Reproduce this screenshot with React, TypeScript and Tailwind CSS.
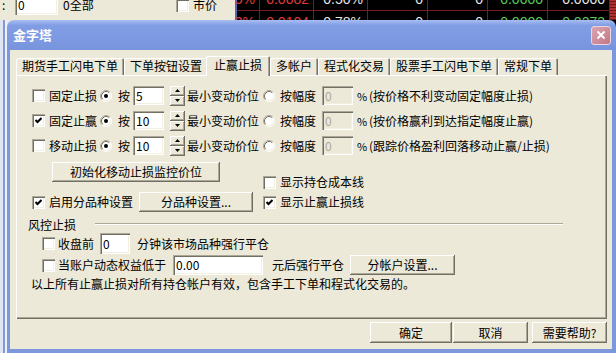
import React from "react";

const raised =
  "bg-[#ece9d8] shadow-[inset_-1px_-1px_#716f64,inset_1px_1px_#fff,inset_-2px_-2px_#aca899]";
const sunken =
  "shadow-[inset_1px_1px_#aca899,inset_2px_2px_#716f64,inset_-1px_-1px_#fff,inset_-2px_-2px_#f1efe2]";

function Box({ on = false }: { on?: boolean }) {
  return (
    <span className={`flex h-[13px] w-[13px] shrink-0 items-center justify-center bg-white ${sunken}`}>
      {on && (
        <svg width="7" height="7" viewBox="0 0 7 7">
          <polyline points="0.5,3 2.5,5 6.5,1" fill="none" stroke="#000" strokeWidth="2" />
        </svg>
      )}
    </span>
  );
}

function Check({
  on = false,
  label,
  tight = false,
  className = "",
}: {
  on?: boolean;
  label: string;
  tight?: boolean;
  className?: string;
}) {
  return (
    <span className={`flex h-[16px] items-center ${className}`}>
      <Box on={on} />
      <span className={tight ? "ml-[3px]" : "ml-[4px]"}>{label}</span>
    </span>
  );
}

function Radio({ on = false, className = "" }: { on?: boolean; className?: string }) {
  return (
    <svg className={`shrink-0 ${className}`} width="12" height="12" viewBox="0 0 12 12">
      <circle cx="6" cy="6" r="5" fill="#fff" />
      <path d="M2.11 9.89A5.5 5.5 0 0 1 9.89 2.11" fill="none" stroke="#aca899" />
      <path d="M2.82 9.18A4.5 4.5 0 0 1 9.18 2.82" fill="none" stroke="#716f64" />
      <path d="M9.89 2.11A5.5 5.5 0 0 1 2.11 9.89" fill="none" stroke="#fff" />
      <path d="M9.18 2.82A4.5 4.5 0 0 1 2.82 9.18" fill="none" stroke="#f1efe2" />
      {on && <circle cx="6" cy="6" r="2" fill="#000" />}
    </svg>
  );
}

function Field({ value, off = false, className = "" }: { value: string; off?: boolean; className?: string }) {
  return (
    <span
      className={`flex shrink-0 items-center pl-[3px] ${off ? "bg-[#ece9d8] text-[#aca899]" : "bg-white"} ${sunken} ${className}`}
    >
      {value}
    </span>
  );
}

function Spin({ className = "" }: { className?: string }) {
  return (
    <span className={`flex h-[20px] w-[15px] shrink-0 flex-col ${className}`}>
      <span className={`flex h-[10px] items-center justify-center ${raised}`}>
        <svg width="5" height="3" viewBox="0 0 5 3">
          <polygon points="2.5,0 5,3 0,3" fill="#000" />
        </svg>
      </span>
      <span className={`flex h-[10px] items-center justify-center ${raised}`}>
        <svg width="5" height="3" viewBox="0 0 5 3">
          <polygon points="0,0 5,0 2.5,3" fill="#000" />
        </svg>
      </span>
    </span>
  );
}

function Btn({ children, className = "" }: { children: React.ReactNode; className?: string }) {
  return <span className={`flex shrink-0 items-center justify-center ${raised} ${className}`}>{children}</span>;
}

const red = "text-[#e03c3c]";
const white = "text-[#e6e6e6]";
const green = "text-[#5cc85c]";

const cols = [
  { w: "w-[23px]", a: "5%", ca: red, b: "3%", cb: red },
  { w: "w-[54px]", a: "0.0082", ca: red, b: "0.0104", cb: red },
  { w: "w-[54px]", a: "0.50%", ca: white, b: "0.78%", cb: white },
  { w: "w-[60px]", a: "0", ca: white, b: "0", cb: white },
  { w: "w-[60px]", a: "0", ca: white, b: "0", cb: white },
  { w: "w-[60px]", a: "0.0000", ca: green, b: "0.0000", cb: green },
  { w: "w-[62px]", a: "0.0000", ca: white, b: "0.0273", cb: green },
];

const tabs = ["期货手工闪电下单", "下单按钮设置", "止赢止损", "多帐户", "程式化交易", "股票手工闪电下单", "常规下单"];

const stops = [
  { on: false, label: "固定止损", v: "5", note: "(按价格不利变动固定幅度止损)" },
  { on: true, label: "固定止赢", v: "10", note: "(按价格赢利到达指定幅度止赢)" },
  { on: false, label: "移动止损", v: "10", note: "(跟踪价格盈利回落移动止赢/止损)" },
];

export default function App() {
  return (
    <div className="flex h-[353px] w-[616px] flex-col overflow-hidden bg-[#ece9d8] font-['Noto_Sans_CJK_SC',sans-serif] text-[12px] leading-[16px] text-black">
      {/* main window behind the dialog */}
      <div className="flex h-[20px] shrink-0 overflow-hidden">
        <div className="flex w-[235px] shrink-0 items-start">
          <span className="-mt-[3px] ml-[2px] w-[13px]">:</span>
          <Field value="0" className="-mt-[5px] h-[20px] w-[43px]" />
          <span className="-mt-[3px] ml-[5px] w-[31px]">0全部</span>
          <span className="-mt-[1px] ml-[82px]">
            <Box />
          </span>
          <span className="-mt-[3px] ml-[4px]">市价</span>
        </div>
        <div className="w-[2px] shrink-0 bg-[#5868b8]" />
        <div className="-mt-[13px] flex flex-1 bg-black font-['Liberation_Sans',sans-serif] text-[14px]">
          {cols.map((c, i) => (
            <div key={i} className={`flex shrink-0 flex-col border-r border-[#7a1a1a] ${c.w}`}>
              <div className={`flex h-[24px] shrink-0 items-center justify-end border-b border-[#7a1a1a] pr-[4px] ${c.ca}`}>
                {c.a}
              </div>
              <div className={`flex h-[22px] shrink-0 items-center justify-end pr-[4px] ${c.cb}`}>{c.b}</div>
            </div>
          ))}
          <div className="w-[6px] bg-[repeating-linear-gradient(to_bottom,#b03030_0px,#b03030_2px,#701818_2px,#701818_3px)]" />
        </div>
      </div>

      <div className="flex flex-1 bg-[linear-gradient(to_right,#ece9d8_237px,#000_237px)]">
        <div className="flex w-[7px] shrink-0">
          <div className="w-[3px] bg-[#dfe5f3]" />
          <div className="w-[2px] bg-[#8299d6]" />
          <div className="w-[2px] bg-[#eef1f8]" />
        </div>

        {/* dialog */}
        <div className="flex flex-1 flex-col">
          <div className="flex h-[30px] shrink-0 items-center justify-between rounded-t-[7px] bg-[linear-gradient(to_bottom,#a9bdf1,#819de4_18%,#7b97e0_80%,#7893dc)] pl-[6px] pr-[5px]">
            <span className="text-[13px] font-bold text-white">金字塔</span>
            <span className="flex h-[19px] w-[20px] items-center justify-center rounded-[3px] border border-[#ead6de] bg-[linear-gradient(135deg,#dba6b2,#c47786)]">
              <svg width="10" height="10" viewBox="0 0 10 10">
                <path d="M1.5 1.5L8.5 8.5M8.5 1.5L1.5 8.5" stroke="#fff" strokeWidth="2" />
              </svg>
            </span>
          </div>

          <div className="flex flex-1 flex-col border-b-[4px] border-l-[3px] border-r-[4px] border-[#7d97dd] bg-[#ece9d8] pl-[6px] pr-[5px] pt-[6px]">
            <div className="flex h-[19px] items-end">
              {tabs.map((t, i) =>
                i === 2 ? (
                  <span
                    key={t}
                    className="relative z-10 -mb-px -ml-[2px] h-[20px] rounded-t-[2px] bg-[#ece9d8] px-[8px] pt-[1px] shadow-[inset_1px_1px_#fff,inset_-1px_0_#716f64,inset_-2px_0_#aca899]"
                  >
                    {t}
                  </span>
                ) : (
                  <span
                    key={t}
                    className="h-[17px] rounded-t-[2px] px-[6px] shadow-[inset_1px_1px_#fff,inset_-1px_0_#716f64,inset_-2px_0_#aca899]"
                  >
                    {t}
                  </span>
                )
              )}
            </div>

            <div className="flex h-[244px] w-[591px] flex-col pt-[8px] shadow-[inset_1px_1px_#fff,inset_-1px_-1px_#716f64,inset_-2px_-2px_#aca899]">
              {stops.map((s) => (
                <div key={s.label} className="flex h-[25px] items-center pl-[16px]">
                  <Check on={s.on} label={s.label} />
                  <Radio on className="ml-[3px]" />
                  <span className="ml-[6px]">按</span>
                  <Field value={s.v} className="ml-[3px] h-[19px] w-[31px]" />
                  <Spin className="ml-[6px]" />
                  <span className="ml-[2px]">最小变动价位</span>
                  <Radio className="ml-[4px]" />
                  <span className="ml-[5px]">按幅度</span>
                  <Field value="0" off className="ml-[6px] h-[19px] w-[31px]" />
                  <span className="ml-[4px] w-[12px] text-[11px]">%</span>
                  <span>{s.note}</span>
                </div>
              ))}

              <div className="mt-[4px] flex h-[28px] items-start">
                <Btn className="ml-[36px] h-[20px] w-[168px]">初始化移动止损监控价位</Btn>
                <Check label="显示持仓成本线" className="ml-[43px] self-end" />
              </div>

              <div className="mt-[2px] flex h-[20px] items-center pl-[16px]">
                <Check on label="启用分品种设置" />
                <Btn className="ml-[6px] h-[20px] w-[114px]">分品种设置...</Btn>
                <Check on label="显示止赢止损线" className="ml-[10px]" />
              </div>

              <div className="mt-[4px] flex h-[17px] items-start">
                <span className="ml-[12px] mt-[1px]">风控止损</span>
                <span className="ml-[19px] mt-[7px] h-[2px] w-[468px] border-b border-t border-b-white border-t-[#aca899]" />
              </div>

              <div className="flex h-[21px] items-center pl-[26px]">
                <Check tight label="收盘前" />
                <Field value="0" className="ml-[6px] h-[21px] w-[30px]" />
                <span className="ml-[7px]">分钟该市场品种强行平仓</span>
              </div>

              <div className="flex h-[22px] items-center pl-[26px]">
                <Check tight label="当账户动态权益低于" />
                <Field value="0.00" className="ml-[7px] h-[20px] w-[90px]" />
                <span className="ml-[9px]">元后强行平仓</span>
                <Btn className="ml-[6px] h-[20px] w-[105px]">分帐户设置...</Btn>
              </div>

              <div className="ml-[15px] h-[16px]">以上所有止赢止损对所有持仓帐户有效，包含手工下单和程式化交易的。</div>
            </div>

            <div className="mt-[3px] flex justify-end">
              <Btn className="h-[21px] w-[82px]">确定</Btn>
              <Btn className="ml-[1px] h-[21px] w-[75px]">取消</Btn>
              <Btn className="ml-[4px] h-[21px] w-[75px]">需要帮助?</Btn>
            </div>
          </div>
        </div>
      </div>
    </div>
  );
}
